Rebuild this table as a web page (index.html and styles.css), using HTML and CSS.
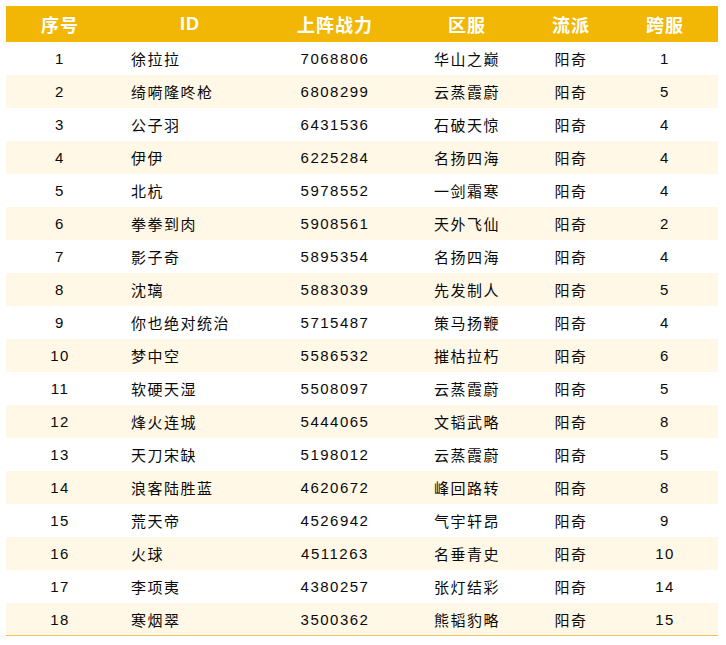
FILE: index.html
```html
<!DOCTYPE html>
<html lang="zh">
<head>
<meta charset="utf-8">
<title>排行</title>
<link rel="stylesheet" href="styles.css">
</head>
<body>
<div class="table">
  <div class="row head">
    <div class="c">序号</div><div class="c">ID</div><div class="c">上阵战力</div><div class="c">区服</div><div class="c">流派</div><div class="c">跨服</div>
  </div>
  <div class="row"><div class="c">1</div><div class="c id">徐拉拉</div><div class="c">7068806</div><div class="c">华山之巅</div><div class="c">阳奇</div><div class="c">1</div></div>
  <div class="row alt"><div class="c">2</div><div class="c id">绮嗬隆咚枪</div><div class="c">6808299</div><div class="c">云蒸霞蔚</div><div class="c">阳奇</div><div class="c">5</div></div>
  <div class="row"><div class="c">3</div><div class="c id">公子羽</div><div class="c">6431536</div><div class="c">石破天惊</div><div class="c">阳奇</div><div class="c">4</div></div>
  <div class="row alt"><div class="c">4</div><div class="c id">伊伊</div><div class="c">6225284</div><div class="c">名扬四海</div><div class="c">阳奇</div><div class="c">4</div></div>
  <div class="row"><div class="c">5</div><div class="c id">北杭</div><div class="c">5978552</div><div class="c">一剑霜寒</div><div class="c">阳奇</div><div class="c">4</div></div>
  <div class="row alt"><div class="c">6</div><div class="c id">拳拳到肉</div><div class="c">5908561</div><div class="c">天外飞仙</div><div class="c">阳奇</div><div class="c">2</div></div>
  <div class="row"><div class="c">7</div><div class="c id">影子奇</div><div class="c">5895354</div><div class="c">名扬四海</div><div class="c">阳奇</div><div class="c">4</div></div>
  <div class="row alt"><div class="c">8</div><div class="c id">沈璃</div><div class="c">5883039</div><div class="c">先发制人</div><div class="c">阳奇</div><div class="c">5</div></div>
  <div class="row"><div class="c">9</div><div class="c id">你也绝对统治</div><div class="c">5715487</div><div class="c">策马扬鞭</div><div class="c">阳奇</div><div class="c">4</div></div>
  <div class="row alt"><div class="c">10</div><div class="c id">梦中空</div><div class="c">5586532</div><div class="c">摧枯拉朽</div><div class="c">阳奇</div><div class="c">6</div></div>
  <div class="row"><div class="c">11</div><div class="c id">软硬天湿</div><div class="c">5508097</div><div class="c">云蒸霞蔚</div><div class="c">阳奇</div><div class="c">5</div></div>
  <div class="row alt"><div class="c">12</div><div class="c id">烽火连城</div><div class="c">5444065</div><div class="c">文韬武略</div><div class="c">阳奇</div><div class="c">8</div></div>
  <div class="row"><div class="c">13</div><div class="c id">天刀宋缺</div><div class="c">5198012</div><div class="c">云蒸霞蔚</div><div class="c">阳奇</div><div class="c">5</div></div>
  <div class="row alt"><div class="c">14</div><div class="c id">浪客陆胜蓝</div><div class="c">4620672</div><div class="c">峰回路转</div><div class="c">阳奇</div><div class="c">8</div></div>
  <div class="row"><div class="c">15</div><div class="c id">荒天帝</div><div class="c">4526942</div><div class="c">气宇轩昂</div><div class="c">阳奇</div><div class="c">9</div></div>
  <div class="row alt"><div class="c">16</div><div class="c id">火球</div><div class="c">4511263</div><div class="c">名垂青史</div><div class="c">阳奇</div><div class="c">10</div></div>
  <div class="row"><div class="c">17</div><div class="c id">李项夷</div><div class="c">4380257</div><div class="c">张灯结彩</div><div class="c">阳奇</div><div class="c">14</div></div>
  <div class="row alt last"><div class="c">18</div><div class="c id">寒烟翠</div><div class="c">3500362</div><div class="c">熊韬豹略</div><div class="c">阳奇</div><div class="c">15</div></div>
</div>
</body>
</html>
```
FILE: styles.css
```css
html, body {
  margin: 0;
  padding: 0;
  background: #ffffff;
}
body {
  padding: 6px;
  font-family: "Liberation Sans", "Noto Sans CJK SC", sans-serif;
  color: #0a0a0a;
}
.table {
  width: 712px;
}
.row {
  display: grid;
  grid-template-columns: 108px 152px 138px 126px 82px 106px;
  height: 33px;
  align-items: center;
  font-size: 15px;
  letter-spacing: 1.5px;
}
.row.alt {
  background: #fff8e6;
}
.row.head {
  height: 36px;
  background: #f2b705;
  color: #ffffff;
  font-weight: bold;
  font-size: 18px;
  letter-spacing: 1px;
}
.row.last {
  height: 33px;
  box-sizing: border-box;
  border-bottom: 1px solid #f3c15a;
}
.c {
  text-align: center;
  white-space: nowrap;
}
.c.id {
  text-align: left;
  padding-left: 17px;
}
```
